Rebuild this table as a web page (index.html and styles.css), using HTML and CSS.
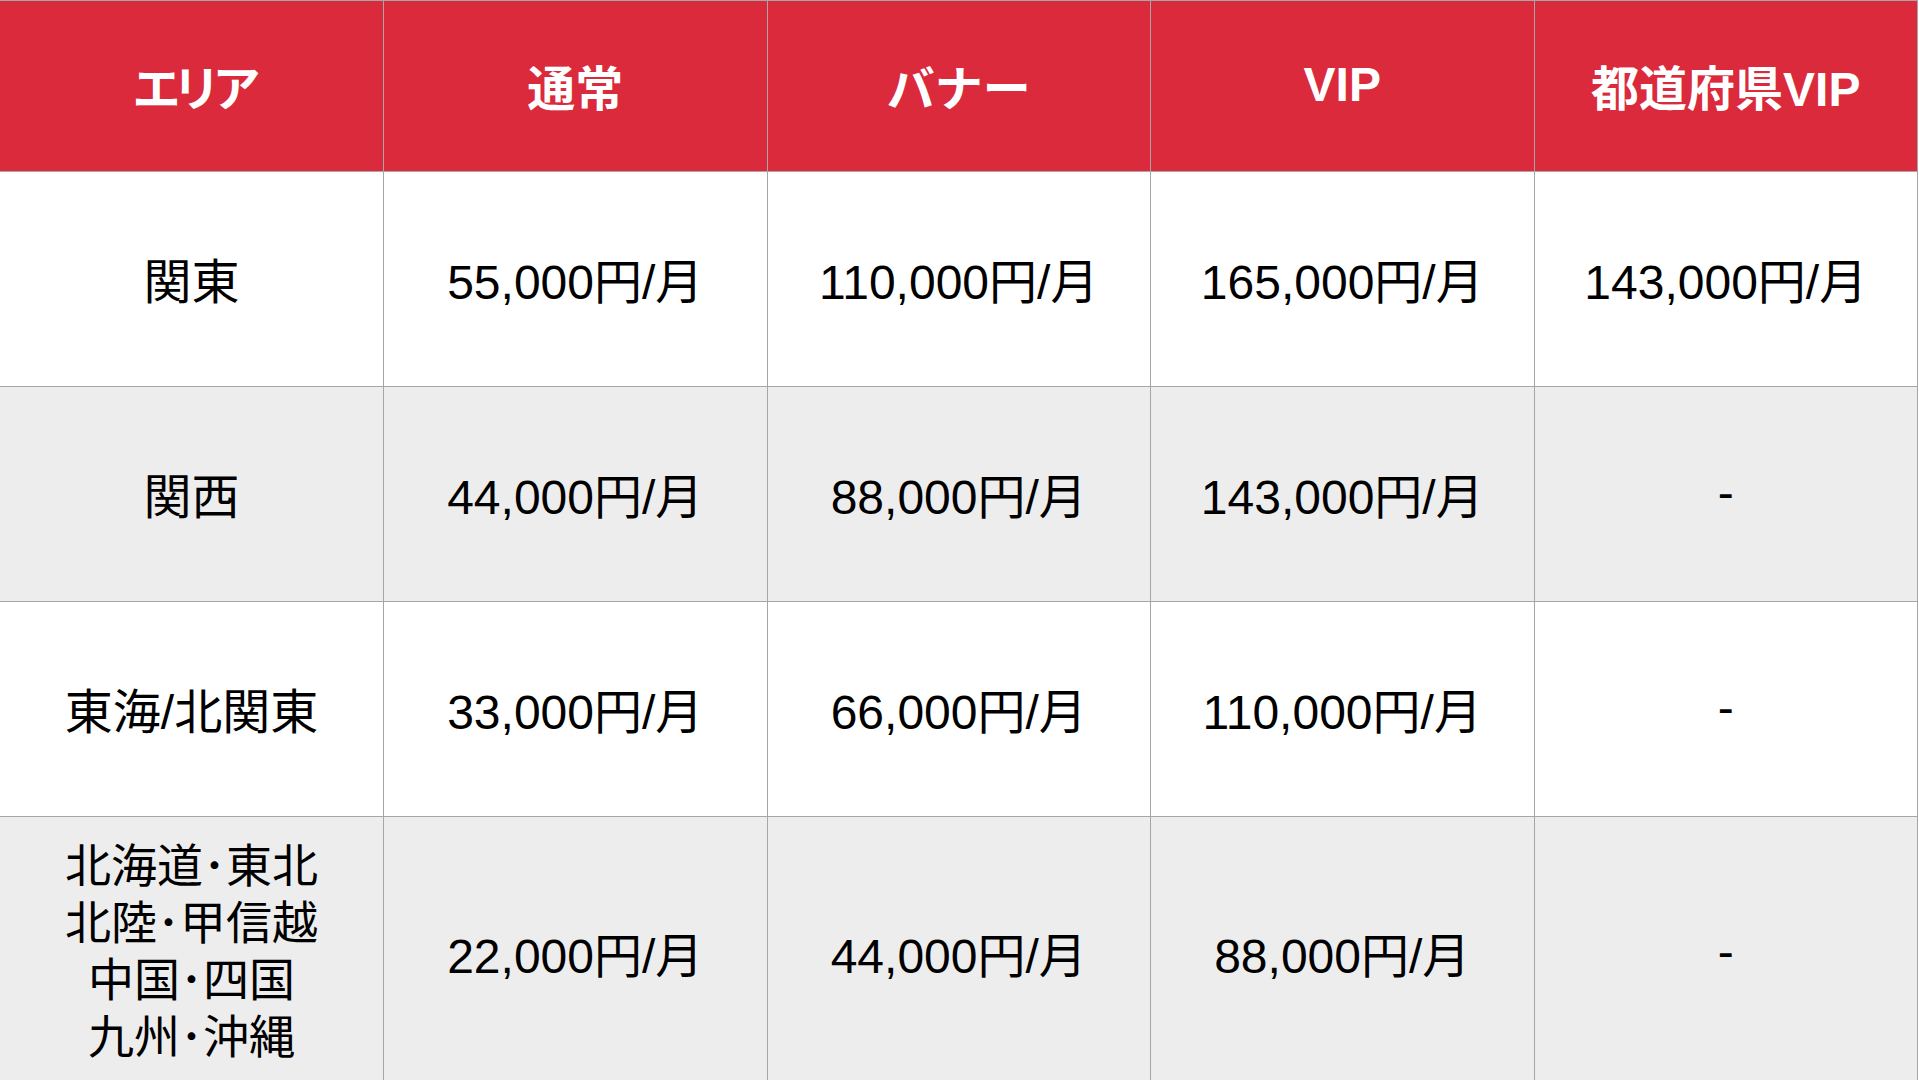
FILE: index.html
```html
<!DOCTYPE html>
<html lang="ja">
<head>
<meta charset="utf-8">
<title>料金表</title>
<link rel="stylesheet" href="styles.css">
</head>
<body>
<table class="price-table">
  <thead>
    <tr>
      <th class="tight">エリア</th>
      <th>通常</th>
      <th>バナー</th>
      <th>VIP</th>
      <th>都道府県VIP</th>
    </tr>
  </thead>
  <tbody>
    <tr class="row">
      <td class="area">関東</td>
      <td>55,000円/月</td>
      <td>110,000円/月</td>
      <td>165,000円/月</td>
      <td>143,000円/月</td>
    </tr>
    <tr class="row alt">
      <td class="area">関西</td>
      <td>44,000円/月</td>
      <td>88,000円/月</td>
      <td>143,000円/月</td>
      <td>-</td>
    </tr>
    <tr class="row">
      <td class="area">東海/北関東</td>
      <td>33,000円/月</td>
      <td>66,000円/月</td>
      <td>110,000円/月</td>
      <td>-</td>
    </tr>
    <tr class="row alt last">
      <td class="area multi">北海道･東北<br>北陸･甲信越<br>中国･四国<br>九州･沖縄</td>
      <td>22,000円/月</td>
      <td>44,000円/月</td>
      <td>88,000円/月</td>
      <td>-</td>
    </tr>
  </tbody>
</table>
</body>
</html>
```

FILE: styles.css
```css
html, body {
  margin: 0;
  padding: 0;
  background: #ffffff;
  overflow: hidden;
}

body {
  width: 1919px;
  height: 1080px;
  font-family: "Liberation Sans", "Noto Sans CJK JP", sans-serif;
  color: #000000;
}

.price-table {
  width: 1918px;
  border-collapse: collapse;
  table-layout: fixed;
}

.price-table th,
.price-table td {
  border: 1px solid #a6a6a6;
  text-align: center;
  vertical-align: middle;
  padding: 0;
}

.price-table th:first-child,
.price-table td:first-child {
  border-left: none;
}

.price-table th {
  background: #da2a3c;
  color: #ffffff;
  font-weight: 700;
  font-size: 48px;
  height: 171px;
  box-sizing: border-box;
  padding-bottom: 3px;
}

.price-table th.tight {
  letter-spacing: -8px;
  padding-left: 2px;
}

.price-table td {
  font-size: 48px;
  font-weight: 400;
  height: 215px;
  box-sizing: border-box;
  padding-bottom: 3px;
}

.row.alt td {
  background: #ededed;
}

.row.last td {
  height: 270px;
  padding-bottom: 0;
}

.area {
  font-size: 45px;
}

.area.multi {
  font-size: 46px;
  line-height: 57px;
}
```
